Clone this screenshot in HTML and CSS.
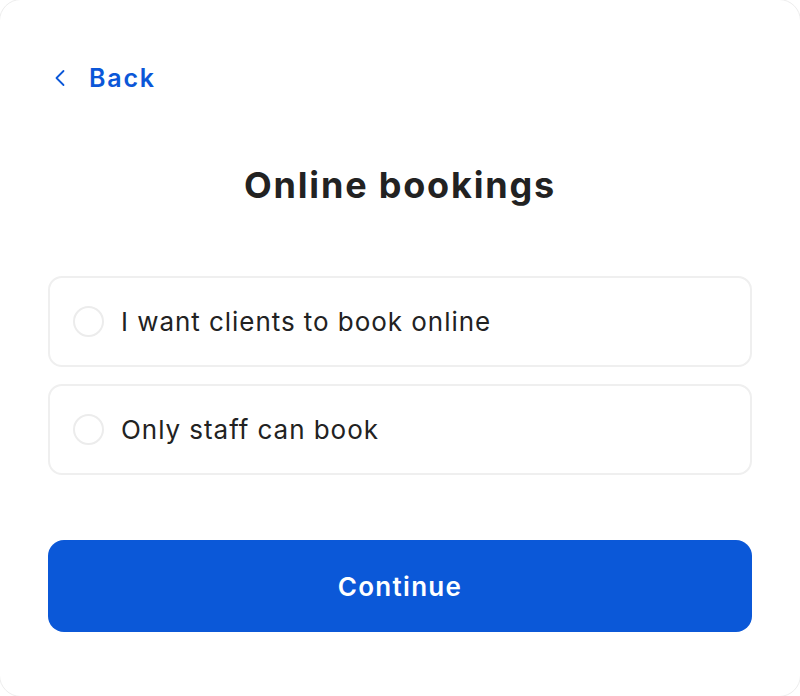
FILE: index.html
```html
<!DOCTYPE html>
<html lang="en">
<head>
<meta charset="UTF-8" />
<meta name="viewport" content="width=device-width, initial-scale=1" />
<title>Online bookings</title>
<link rel="stylesheet" href="styles.css">
</head>
<body>
  <section class="card" aria-label="Online bookings">
    <a class="back-link" href="#">
      <svg viewBox="0 0 12 18" aria-hidden="true" focusable="false">
        <polyline points="9.5 2 2.5 9 9.5 16"></polyline>
      </svg>
      Back
    </a>

    <h1>Online bookings</h1>

    <form class="options">
      <label class="option">
        <input type="radio" name="booking" value="online" />
        <span class="radio"></span>
        <span class="option-text">I want clients to book online</span>
      </label>
      <label class="option">
        <input type="radio" name="booking" value="staff" />
        <span class="radio"></span>
        <span class="option-text">Only staff can book</span>
      </label>

      <button type="submit" class="continue-btn">Continue</button>
    </form>
  </section>
</body>
</html>
```

FILE: styles.css
```css
/* Reset & base */
*, *::before, *::after {
  box-sizing: border-box;
}

body {
  margin: 0;
  font-family: Inter, 'Liberation Sans', sans-serif;
  background: #fff;
  color: #222;
  overflow: hidden;
}

/* card edge sits just outside the viewport, only the corners show */
.card {
  background: #fff;
  border: 1px solid #ededed;
  border-radius: 22px;
  width: 802px;
  height: 698px;
  margin: -1px;
  padding: 58px 48px 0;
}

/* Back link */
.back-link {
  display: inline-flex;
  align-items: center;
  gap: 23px;
  padding-left: 6px;
  color: #0b57d8;
  font-size: 25px;
  font-weight: 600;
  letter-spacing: 1.8px;
  text-decoration: none;
  line-height: 40px;
}

.back-link svg {
  width: 12px;
  height: 18px;
  stroke: #0b57d8;
  stroke-width: 1.8;
  stroke-linecap: round;
  stroke-linejoin: round;
  fill: none;
}

h1 {
  margin: 65px 0 69px;
  font-size: 36px;
  font-weight: 700;
  letter-spacing: 1.8px;
  line-height: 44px;
  text-align: center;
  color: #222;
}

/* Options */
.options {
  display: flex;
  flex-direction: column;
  gap: 17px;
}

.option {
  display: flex;
  align-items: center;
  gap: 17px;
  height: 91px;
  padding: 0 23px;
  border: 2px solid #efefef;
  border-radius: 14px;
  cursor: pointer;
}

.option input {
  display: none;
}

.radio {
  width: 31px;
  height: 31px;
  border: 2px solid #ececec;
  border-radius: 50%;
  flex-shrink: 0;
}

.option input:checked + .radio {
  border: 9px solid #0b58d8;
}

.option-text {
  font-size: 26px;
  letter-spacing: 0.95px;
  color: #222;
}

.continue-btn {
  margin-top: 48px;
  height: 92px;
  border: none;
  border-radius: 16px;
  background: #0b58d8;
  color: #fff;
  font-family: inherit;
  font-size: 26px;
  font-weight: 600;
  letter-spacing: 1.3px;
  cursor: pointer;
}
```
